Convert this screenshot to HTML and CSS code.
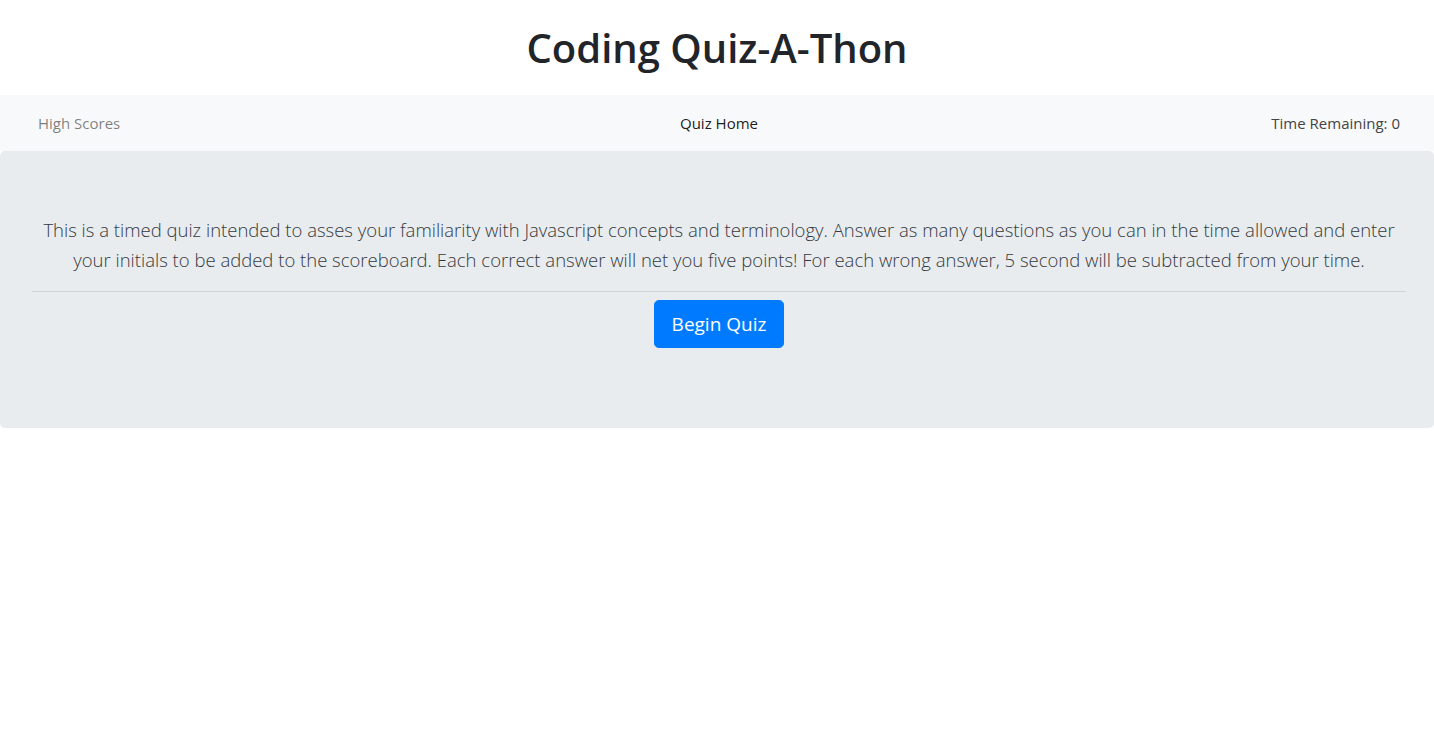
FILE: index.html
```html
<!DOCTYPE html>
<html lang="en">
<head>
<meta charset="utf-8">
<title>Coding Quiz-A-Thon</title>
<link rel="stylesheet" href="styles.css">
</head>
<body>
  <h1 class="title">Coding Quiz-A-Thon</h1>
  <nav class="navbar">
    <a class="nav-link muted" href="#">High Scores</a>
    <a class="nav-link active" href="#">Quiz Home</a>
    <span class="timer">Time Remaining: 0</span>
  </nav>
  <main class="jumbotron">
    <p class="lead">This is a timed quiz intended to asses your familiarity with Javascript concepts and terminology. Answer as many questions as you can in the time allowed and enter your initials to be added to the scoreboard. Each correct answer will net you five points! For each wrong answer, 5 second will be subtracted from your time.</p>
    <hr class="divider">
    <div class="actions">
      <button class="btn-primary" type="button">Begin Quiz</button>
    </div>
  </main>
</body>
</html>
```
FILE: styles.css
```css
* { box-sizing: border-box; }
html, body { margin: 0; padding: 0; }
body {
  font-family: "Open Sans", "Noto Sans", sans-serif;
  color: #212529;
  background: #fff;
  font-size: 16px;
  line-height: 1.5;
}
.title {
  margin: 24px 0 23px;
  text-align: center;
  font-size: 40px;
  line-height: 48px;
  font-weight: 600;
  color: #212529;
}
.navbar {
  display: grid;
  grid-template-columns: 1fr auto 1fr;
  align-items: center;
  height: 56px;
  padding: 0 34px 0 38px;
  background: #f8f9fa;
}
.nav-link {
  text-decoration: none;
  font-size: 15px;
}
.muted { color: rgba(0,0,0,.5); justify-self: start; }
.active { color: rgba(0,0,0,.9); justify-self: center; }
.timer { color: #444; font-size: 15px; justify-self: end; }
.jumbotron {
  background: #e9ecef;
  border-radius: 4.8px;
  padding: 64px 28px 64px 32px;
}
.lead {
  margin: 0;
  text-align: center;
  font-size: 18.5px;
  line-height: 30px;
  font-weight: 300;
  color: #343a40;
}
.divider {
  margin: 16px 0 8px;
  border: 0;
  border-top: 1px solid rgba(0,0,0,.1);
}
.actions {
  display: flex;
  justify-content: center;
  padding-bottom: 16px;
}
.btn-primary {
  font-family: inherit;
  font-size: 19px;
  line-height: 30px;
  padding: 8px 17px;
  color: #fff;
  background: #007bff;
  border: 1px solid #007bff;
  border-radius: 4.8px;
  cursor: pointer;
}
```
